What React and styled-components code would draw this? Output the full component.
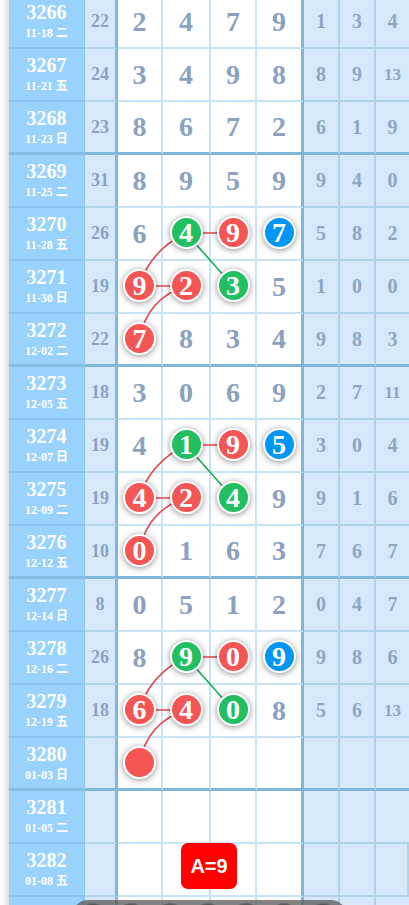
import React from 'react';
import styled, { createGlobalStyle } from 'styled-components';

const ROW_H = 53;
const CENTER_X = [130.5, 177, 224, 270];
const GROUPS = [4, 8, 12];

const rows = [
  ['3266', '11-18 二', '22', [2, 4, 7, 9], [1, 3, 4]],
  ['3267', '11-21 五', '24', [3, 4, 9, 8], [8, 9, 13]],
  ['3268', '11-23 日', '23', [8, 6, 7, 2], [6, 1, 9]],
  ['3269', '11-25 二', '31', [8, 9, 5, 9], [9, 4, 0]],
  ['3270', '11-28 五', '26', [6, 'g4', 'r9', 'b7'], [5, 8, 2]],
  ['3271', '11-30 日', '19', ['r9', 'r2', 'g3', 5], [1, 0, 0]],
  ['3272', '12-02 二', '22', ['r7', 8, 3, 4], [9, 8, 3]],
  ['3273', '12-05 五', '18', [3, 0, 6, 9], [2, 7, 11]],
  ['3274', '12-07 日', '19', [4, 'g1', 'r9', 'b5'], [3, 0, 4]],
  ['3275', '12-09 二', '19', ['r4', 'r2', 'g4', 9], [9, 1, 6]],
  ['3276', '12-12 五', '10', ['r0', 1, 6, 3], [7, 6, 7]],
  ['3277', '12-14 日', '8', [0, 5, 1, 2], [0, 4, 7]],
  ['3278', '12-16 二', '26', [8, 'g9', 'r0', 'b9'], [9, 8, 6]],
  ['3279', '12-19 五', '18', ['r6', 'r4', 'g0', 8], [5, 6, 13]],
  ['3280', '01-03 日', '', ['r', '', '', ''], ['', '', '']],
  ['3281', '01-05 二', '', ['', '', '', ''], ['', '', '']],
  ['3282', '01-08 五', '', ['', '', '', ''], ['', '', '']],
  ['', '', '', ['', '', '', ''], ['', '', '']],
];

const BALL = { r: '#f45656', g: '#22bf62', b: '#0096f6' };
const THICK = '#7fb7da';

const GlobalStyle = createGlobalStyle`
  html, body {
    margin: 0;
    padding: 0;
    overflow: hidden;
    background: #fff;
  }
`;

const Table = styled.div`
  position: relative;
  margin: -4px 0 0 9px;
  box-shadow: -2px 0 7px rgba(0, 0, 0, 0.18);
  font-family: 'Liberation Serif', 'Noto Sans CJK SC', serif;
  font-weight: bold;
`;

const Row = styled.div`
  position: relative;
  display: grid;
  grid-template-columns: 76px 33px 45px 48px 46px 47px 36px 36px 33px;
  height: ${ROW_H}px;
`;

const Cell = styled.div`
  box-sizing: border-box;
  display: flex;
  align-items: center;
  justify-content: center;
  border-bottom: ${p => (p.$thick ? `3px solid ${THICK}` : '2px solid')};
`;

const IssueCell = styled(Cell)`
  flex-direction: column;
  background: #99d2fc;
  color: #fff;
  border-bottom-color: ${p => (p.$thick ? '#84bfe6' : '#88c3ea')};
  border-right: 1px solid #8cc6ec;
`;

const Issue = styled.div`
  font-size: 20px;
  line-height: 20px;
`;

const DateText = styled.div`
  font-size: 12px;
  line-height: 16px;
  margin-top: 3px;
`;

const SumCell = styled(Cell)`
  background: #d6e9fa;
  color: #8aa2c1;
  font-size: 18px;
  border-bottom-color: ${p => (p.$thick ? THICK : '#b1d6ec')};
  border-right: 3px solid ${THICK};
`;

const DigitCell = styled(Cell)`
  background: #fff;
  color: #8aa1c0;
  font-size: 28px;
  border-bottom-color: ${p => (p.$thick ? THICK : '#c8e4f2')};
  border-right: ${p => (p.$last ? `3px solid ${THICK}` : '2px solid #c8e4f2')};
`;

const TailCell = styled(Cell)`
  background: #d6e9fa;
  color: #8fa6c3;
  font-size: ${p => (p.$small ? '17px' : '20px')};
  border-bottom-color: ${p => (p.$thick ? THICK : '#afd4ea')};
  border-right: 2px solid #afd4ea;
  &:last-child {
    border-right: none;
  }
`;

const Ball = styled.span`
  position: relative;
  z-index: 2;
  box-sizing: border-box;
  width: 33px;
  height: 33px;
  margin-top: -2px;
  border-radius: 50%;
  border: 2px solid #fff;
  background: ${p => BALL[p.$color]};
  box-shadow: 0 1px 6px rgba(0, 0, 0, 0.45);
  color: #fff;
  font-size: 28px;
  line-height: 29px;
  text-align: center;
`;

const Lines = styled.svg`
  position: absolute;
  left: 0;
  top: 0;
  z-index: 1;
  pointer-events: none;
`;

const Badge = styled.div`
  position: absolute;
  z-index: 3;
  left: 172px;
  top: -1px;
  width: 56px;
  height: 46px;
  border-radius: 7px;
  background: #ff0000;
  color: #fff;
  font-family: 'Liberation Sans', Arial, sans-serif;
  font-size: 20px;
  font-weight: bold;
  display: flex;
  align-items: center;
  justify-content: center;
`;

const Dock = styled.div`
  position: fixed;
  left: 72px;
  top: 900px;
  width: 275px;
  height: 50px;
  box-sizing: border-box;
  padding: 3px 0 0 7px;
  display: flex;
  gap: 10.3px;
  border-radius: 16px;
  background: rgba(95, 95, 95, 0.78);
  z-index: 5;
`;

const DockDot = styled.span`
  width: 28px;
  height: 28px;
  border-radius: 50%;
  background: rgba(55, 55, 55, 0.7);
  box-shadow: inset 0 1px 2px rgba(255, 255, 255, 0.2);
`;

const cy = r => ROW_H * r + 25;

function Links() {
  const paths = [];
  GROUPS.forEach(g => {
    const A = [CENTER_X[1], cy(g)];
    const B = [CENTER_X[2], cy(g)];
    const C = [CENTER_X[0], cy(g + 1)];
    const D = [CENTER_X[1], cy(g + 1)];
    const E = [CENTER_X[2], cy(g + 1)];
    const F = [CENTER_X[0], cy(g + 2)];
    paths.push(
      <path key={g + 'ab'} d={`M${A} L${B}`} stroke="#e2474d" />,
      <path key={g + 'ca'} d={`M${C} Q${C[0] + 10},${A[1] + 18} ${A}`} stroke="#e2474d" />,
      <path key={g + 'cd'} d={`M${C} L${D}`} stroke="#e2474d" />,
      <path key={g + 'df'} d={`M${D} Q${F[0] + 8},${D[1] + 12} ${F}`} stroke="#e2474d" />,
      <path key={g + 'ae'} d={`M${A} L${E}`} stroke="#1aa957" />
    );
  });
  return (
    <Lines width="400" height={ROW_H * rows.length} fill="none" strokeWidth="1.6">
      {paths}
    </Lines>
  );
}

function Digit({ value, thick, last }) {
  if (typeof value === 'string' && /^[rgb]/.test(value)) {
    return (
      <DigitCell $thick={thick} $last={last}>
        <Ball $color={value[0]}>{value.slice(1)}</Ball>
      </DigitCell>
    );
  }
  return (
    <DigitCell $thick={thick} $last={last}>
      {value}
    </DigitCell>
  );
}

export default function App() {
  return (
    <>
      <GlobalStyle />
      <Table>
        <Links />
        {rows.map(([issue, date, sum, digits, tails], i) => {
          const thick = i % 4 === 2;
          return (
            <Row key={i}>
              <IssueCell $thick={thick}>
                <Issue>{issue}</Issue>
                <DateText>{date}</DateText>
              </IssueCell>
              <SumCell $thick={thick}>{sum}</SumCell>
              {digits.map((d, j) => (
                <Digit key={j} value={d} thick={thick} last={j === 3} />
              ))}
              {tails.map((t, j) => (
                <TailCell key={j} $thick={thick} $small={t > 9}>
                  {t}
                </TailCell>
              ))}
              {issue === '3282' && <Badge>A=9</Badge>}
            </Row>
          );
        })}
      </Table>
      <Dock>
        {Array.from({ length: 7 }, (_, i) => (
          <DockDot key={i} />
        ))}
      </Dock>
    </>
  );
}
